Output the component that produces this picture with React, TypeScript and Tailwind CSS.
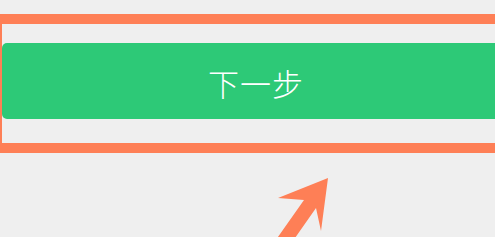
export default function App() {
  return (
    <div className="relative w-[495px] h-[237px] overflow-hidden bg-[#efefef] pt-[14px]">
      <div className="ml-[-8px] w-[540px] border-[10px] border-[#fe7f56] pt-[19px] pb-[24px]">
        <div className="h-[76px] w-[520px] rounded-[5px] bg-[#2dc977] flex items-center justify-center pr-[12px] pt-[3px]">
          <span
            className="text-white text-[31px] font-light leading-none tracking-[1px]"
            style={{ fontFamily: '"Noto Sans CJK SC", "Noto Sans", sans-serif' }}
          >
            下一步
          </span>
        </div>
      </div>
      <svg className="absolute left-0 top-0" width="495" height="237" viewBox="0 0 495 237">
        <path d="M328 178 L278 198 L304 200 L273 244 L288 248 L316 208 L321 231 Z" fill="#fe7f56" />
      </svg>
    </div>
  );
}
